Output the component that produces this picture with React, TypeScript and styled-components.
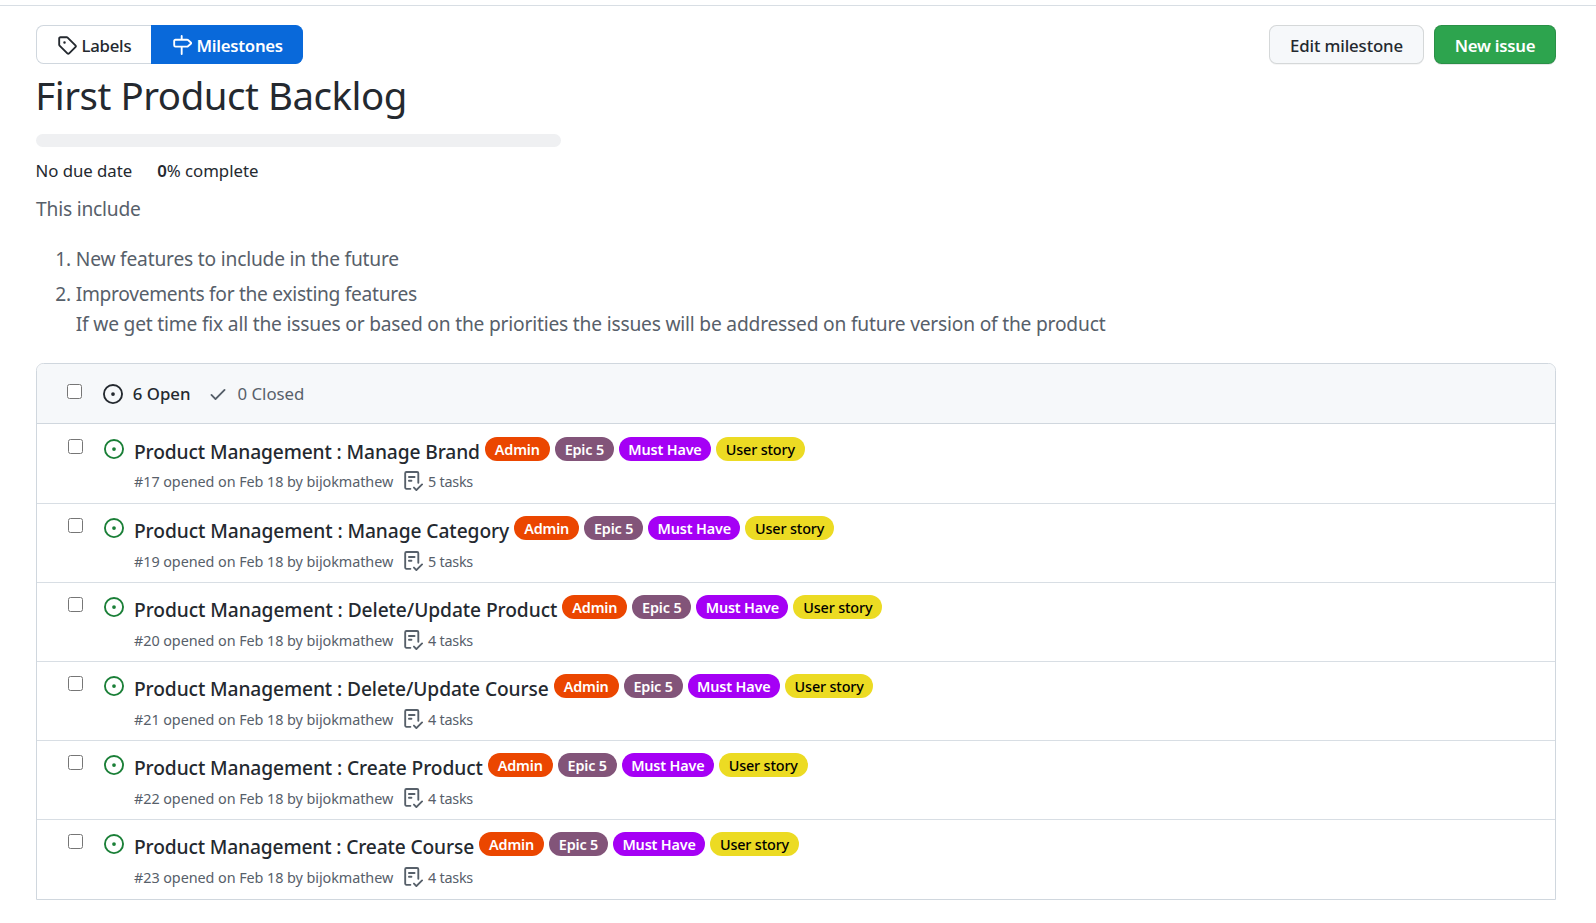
import React from "react";
import styled, { createGlobalStyle } from "styled-components";

const GlobalStyle = createGlobalStyle`
  * { box-sizing: border-box; }
  body {
    margin: 0;
    background: #fff;
    color: #24292f;
    font-family: "Segoe UI", "Noto Sans", "Open Sans", sans-serif;
  }
`;

const Page = styled.main`
  margin-top: 5px;
  border-top: 1px solid #d8dee4;
  padding: 19px 40px 23px 36px;
`;

const Toolbar = styled.div`
  display: flex;
  justify-content: space-between;
`;

const Subnav = styled.nav`
  display: flex;
`;

const NavItem = styled.a<{ $active?: boolean; $width: number }>`
  display: flex;
  align-items: center;
  width: ${(p) => p.$width}px;
  height: 39px;
  padding: 0 0 0 ${(p) => (p.$active ? 21 : 20)}px;
  border: 1px solid ${(p) => (p.$active ? "#0969da" : "#d0d7de")};
  ${(p) => (p.$active ? "border-left: 0;" : "border-right: 0;")}
  border-radius: ${(p) => (p.$active ? "0 7.5px 7.5px 0" : "7.5px 0 0 7.5px")};
  background: ${(p) => (p.$active ? "#0969da" : "#fff")};
  color: ${(p) => (p.$active ? "#fff" : "#24292f")};
  font-size: 16.8px;
  font-weight: ${(p) => (p.$active ? 600 : 500)};
  letter-spacing: ${(p) => (p.$active ? -0.28 : -0.25)}px;
`;

const NavText = styled.span`
  padding: 1px 0 0 4.5px;
`;

const Actions = styled.div`
  display: flex;
  gap: 10px;
`;

const Button = styled.button<{ $primary?: boolean; $width: number }>`
  width: ${(p) => p.$width}px;
  height: 39px;
  padding: 1px 0 0;
  border: 1px solid rgba(27, 31, 36, 0.15);
  border-radius: 7.5px;
  background: ${(p) => (p.$primary ? "#2da44e" : "#f6f8fa")};
  box-shadow: 0 1px 0 ${(p) => (p.$primary ? "rgba(27, 31, 36, 0.1)" : "rgba(27, 31, 36, 0.04)")};
  color: ${(p) => (p.$primary ? "#fff" : "#24292f")};
  font-family: inherit;
  font-size: 16.8px;
  font-weight: ${(p) => (p.$primary ? 600 : 500)};
  letter-spacing: ${(p) => (p.$primary ? -0.25 : -0.11)}px;
`;

const Heading = styled.h1`
  margin: 6px 0 14px -0.7px;
  font-size: 38.4px;
  font-weight: 400;
  line-height: 50px;
  letter-spacing: -0.46px;
`;

const Progress = styled.div`
  width: 525px;
  height: 13px;
  border-radius: 7px;
  background: #eff0f2;
`;

const Stats = styled.div`
  display: flex;
  gap: 25px;
  margin: 11px 0 0 -0.5px;
  font-size: 16.8px;
  line-height: 26px;
  letter-spacing: -0.03px;

  b { font-weight: 600; }
`;

const Description = styled.div`
  margin-top: 10px;
  color: #57606a;
  font-size: 19.2px;
  line-height: 30px;
  letter-spacing: -0.2px;

  p { margin: 0 0 20px; }
  ol { margin: 0; padding-left: 39.8px; }
  li + li { margin-top: 5px; }
`;

const ListLead = styled.span`
  letter-spacing: -0.31px;
`;

const Box = styled.section`
  margin-top: 24px;
  border: 1px solid #d0d7de;
  border-radius: 7.5px 7.5px 0 0;
  overflow: hidden;
`;

const BoxHeader = styled.header`
  display: flex;
  height: 60px;
  padding: 20px 0 0 30px;
  border-bottom: 1px solid #d0d7de;
  background: #f6f8fa;
`;

const Checkbox = styled.input.attrs({ type: "checkbox" })`
  flex: none;
  width: 15px;
  height: 15px;
  margin: 0 21px 0 0;
`;

const State = styled.a<{ $selected?: boolean }>`
  display: flex;
  gap: ${(p) => (p.$selected ? 9.8 : 9)}px;
  height: 20px;
  margin-right: 18px;
  color: ${(p) => (p.$selected ? "#24292f" : "#57606a")};
  font-size: 16.8px;
  font-weight: ${(p) => (p.$selected ? 500 : 400)};
  line-height: 19px;
`;

const OpenMark = styled.span`
  flex: none;
  height: 20px;
  margin-right: 10px;
  color: #1a7f37;
`;

const RowBody = styled.div`
  margin-top: -2px;
`;

const TitleLine = styled.div`
  display: flex;
  gap: 5px;
  height: 30px;
`;

const Title = styled.a<{ $tracking: number }>`
  font-size: 19.2px;
  font-weight: 500;
  line-height: 30px;
  letter-spacing: ${(p) => p.$tracking}px;
  white-space: nowrap;
`;

const Label = styled.span<{ $bg: string; $fg: string; $width: number }>`
  width: ${(p) => p.$width}px;
  height: 24px;
  border-radius: 12px;
  background: ${(p) => p.$bg};
  color: ${(p) => p.$fg};
  font-size: 14.4px;
  font-weight: ${(p) => (p.$fg === "#fff" ? 600 : 500)};
  line-height: 26px;
  text-align: center;
  white-space: nowrap;
  letter-spacing: -0.16px;
`;

const Meta = styled.div`
  display: flex;
  margin-top: 5px;
  color: #57606a;
  font-size: 14.4px;
  line-height: 22px;
`;

const Row = styled.article`
  display: flex;
  height: 79px;
  padding: 14px 0 0 31px;
  border-top: 1px solid #d8dee4;

  &:first-of-type {
    padding-top: 15px;
    border-top: 0;
  }
  &:first-of-type ${Meta} { margin-top: 4px; }
  &:last-of-type { height: 80px; }
`;

const MetaText = styled.span`
  width: 269px;
  letter-spacing: -0.07px;
`;

const Tasks = styled.span`
  display: flex;
  align-items: flex-start;
  gap: 5px;
  letter-spacing: -0.25px;
`;

const Svg = styled.svg`
  display: block;
  flex: none;
  width: 20px;
  height: 20px;
  fill: currentColor;
`;

const ICONS = {
  tag: "M2.5 7.775V2.75a.25.25 0 01.25-.25h5.025a.25.25 0 01.177.073l6.25 6.25a.25.25 0 010 .354l-5.025 5.025a.25.25 0 01-.354 0l-6.25-6.25a.25.25 0 01-.073-.177zm-1.5 0V2.75C1 1.784 1.784 1 2.75 1h5.025c.464 0 .91.184 1.238.513l6.25 6.25a1.75 1.75 0 010 2.474l-5.026 5.026a1.75 1.75 0 01-2.474 0l-6.25-6.25A1.75 1.75 0 011 7.775zM6 5a1 1 0 100 2 1 1 0 000-2z",
  milestone:
    "M7.75 0a.75.75 0 01.75.75V3h3.634c.414 0 .814.147 1.13.414l2.07 1.75a1.75 1.75 0 010 2.672l-2.07 1.75a1.75 1.75 0 01-1.13.414H8.5v5.25a.75.75 0 11-1.5 0V10H2.75A1.75 1.75 0 011 8.25v-3.5C1 3.784 1.784 3 2.75 3H7V.75A.75.75 0 017.75 0zm0 8.5h4.384a.25.25 0 00.161-.06l2.07-1.75a.25.25 0 000-.38l-2.07-1.75a.25.25 0 00-.161-.06H2.75a.25.25 0 00-.25.25v3.5c0 .138.112.25.25.25h5z",
  issue:
    "M8 9.5a1.5 1.5 0 100-3 1.5 1.5 0 000 3zM8 0a8 8 0 100 16A8 8 0 008 0zM1.5 8a6.5 6.5 0 1113 0 6.5 6.5 0 01-13 0z",
  check:
    "M13.78 4.22a.75.75 0 010 1.06l-7.25 7.25a.75.75 0 01-1.06 0L2.22 9.28a.75.75 0 011.06-1.06L6 10.94l6.72-6.72a.75.75 0 011.06 0z",
  checklist:
    "M2.5 1.75a.25.25 0 01.25-.25h8.5a.25.25 0 01.25.25v7.736a.75.75 0 101.5 0V1.75A1.75 1.75 0 0011.25 0h-8.5A1.75 1.75 0 001 1.75v11.5c0 .966.784 1.75 1.75 1.75h3.17a.75.75 0 000-1.5H2.75a.25.25 0 01-.25-.25V1.75zM4.75 4a.75.75 0 000 1.5h4.5a.75.75 0 000-1.5h-4.5zM4 7.75A.75.75 0 014.75 7h2a.75.75 0 010 1.5h-2A.75.75 0 014 7.75zm11.774 3.537a.75.75 0 00-1.048-1.074L10.7 14.145 9.281 12.72a.75.75 0 00-1.062 1.058l1.943 1.95a.75.75 0 001.055.008l4.557-4.45z",
};

const Icon = ({ name }: { name: keyof typeof ICONS }) => (
  <Svg viewBox="0 0 16 16" aria-hidden="true">
    <path fillRule="evenodd" d={ICONS[name]} />
  </Svg>
);

const LABELS = [
  { text: "Admin", bg: "#eb4600", fg: "#fff", width: 65 },
  { text: "Epic 5", bg: "#825479", fg: "#fff", width: 59 },
  { text: "Must Have", bg: "#a500f5", fg: "#fff", width: 92.2 },
  { text: "User story", bg: "#ecdb23", fg: "#000", width: 88.6 },
];

const ISSUES = [
  { id: 17, title: "Manage Brand", tasks: 5, tracking: -0.12 },
  { id: 19, title: "Manage Category", tasks: 5, tracking: -0.08 },
  { id: 20, title: "Delete/Update Product", tasks: 4, tracking: -0.07 },
  { id: 21, title: "Delete/Update Course", tasks: 4, tracking: -0.1 },
  { id: 22, title: "Create Product", tasks: 4, tracking: -0.1 },
  { id: 23, title: "Create Course", tasks: 4, tracking: -0.14 },
];

export default function App() {
  return (
    <>
      <GlobalStyle />
      <Page>
        <Toolbar>
          <Subnav>
            <NavItem $width={115}>
              <Icon name="tag" />
              <NavText>Labels</NavText>
            </NavItem>
            <NavItem $active $width={152}>
              <Icon name="milestone" />
              <NavText>Milestones</NavText>
            </NavItem>
          </Subnav>
          <Actions>
            <Button $width={155}>Edit milestone</Button>
            <Button $primary $width={122}>New issue</Button>
          </Actions>
        </Toolbar>
        <Heading>First Product Backlog</Heading>
        <Progress />
        <Stats>
          <span>No due date</span>
          <span>
            <b>0</b>% complete
          </span>
        </Stats>
        <Description>
          <p>This include</p>
          <ol>
            <li>New features to include in the future</li>
            <li>
              <ListLead>Improvements for the existing features</ListLead>
              <br />
              If we get time fix all the issues or based on the priorities the issues will be addressed on future
              version of the product
            </li>
          </ol>
        </Description>
        <Box>
          <BoxHeader>
            <Checkbox />
            <State $selected>
              <Icon name="issue" />6 Open
            </State>
            <State>
              <Icon name="check" />0 Closed
            </State>
          </BoxHeader>
          {ISSUES.map((issue) => (
            <Row key={issue.id}>
              <Checkbox />
              <OpenMark>
                <Icon name="issue" />
              </OpenMark>
              <RowBody>
                <TitleLine>
                  <Title $tracking={issue.tracking}>Product Management : {issue.title}</Title>
                  {LABELS.map((l) => (
                    <Label key={l.text} $bg={l.bg} $fg={l.fg} $width={l.width}>
                      {l.text}
                    </Label>
                  ))}
                </TitleLine>
                <Meta>
                  <MetaText>#{issue.id} opened on Feb 18 by bijokmathew</MetaText>
                  <Tasks>
                    <Icon name="checklist" />
                    {issue.tasks} tasks
                  </Tasks>
                </Meta>
              </RowBody>
            </Row>
          ))}
        </Box>
      </Page>
    </>
  );
}
